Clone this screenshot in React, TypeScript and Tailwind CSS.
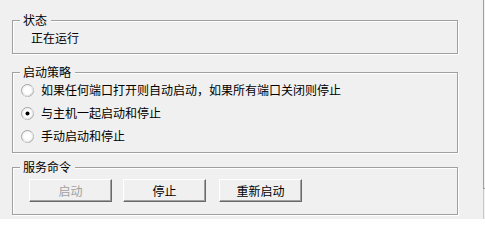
import React from "react";

const font = {
  fontFamily: '"Noto Sans CJK SC", "Noto Sans", sans-serif',
};

function GroupBox({
  title,
  className,
  children,
}: {
  title: string;
  className?: string;
  children: React.ReactNode;
}) {
  return (
    <fieldset
      className={`w-[446px] border border-[#a0a0a0] shadow-[1px_1px_0_#fff,inset_1px_1px_0_#fff] ${className ?? ""}`}
    >
      <legend className="ml-[7px] bg-[#f0f0f0] pl-[3px] pr-[4px] leading-[14px]">
        {title}
      </legend>
      {children}
    </fieldset>
  );
}

function Radio({ checked, label }: { checked?: boolean; label: string }) {
  return (
    <div className="flex h-[14px] items-center">
      <svg width="13" height="13" viewBox="0 0 13 13" className="shrink-0">
        <circle cx="6.5" cy="6.5" r="6" fill="#fff" stroke="#a0a0a0" />
        <path d="M2.3 10.7 A6 6 0 0 0 10.7 2.3" fill="none" stroke="#e3e3e3" strokeWidth="1" />
        <circle cx="6.5" cy="6.5" r="4.8" fill="#fff" stroke="#d8d8d8" strokeWidth="0.6" />
        {checked && <circle cx="6.5" cy="6.5" r="2" fill="#000" />}
      </svg>
      <span className="ml-[7px]">{label}</span>
    </div>
  );
}

function WinButton({
  label,
  disabled,
  className,
}: {
  label: string;
  disabled?: boolean;
  className?: string;
}) {
  return (
    <button
      className={`flex h-[23px] w-[83px] items-center justify-center border border-t-white border-l-white border-r-[#696969] border-b-[#696969] bg-[#f0f0f0] shadow-[inset_-1px_-1px_0_#a0a0a0] leading-[14px] ${
        disabled ? "text-[#a0a0a0]" : "text-black"
      } ${className ?? ""}`}
    >
      {label}
    </button>
  );
}

export default function App() {
  return (
    <div
      className="flex h-[219px] w-[485px] overflow-hidden bg-[#f0f0f0] text-[12px] text-black"
      style={font}
    >
      <div className="flex w-[483px] flex-col pl-[12px] pt-[13px]">
        <GroupBox title="状态">
          <div className="pl-[18px] pt-[4px] pb-[8px] leading-[14px]">正在运行</div>
        </GroupBox>

        <GroupBox title="启动策略" className="mt-[11px]">
          <div className="flex flex-col gap-[9px] pl-[8px] pt-[4px] pb-[9px] leading-[14px]">
            <Radio label="如果任何端口打开则自动启动，如果所有端口关闭则停止" />
            <Radio checked label="与主机一起启动和停止" />
            <Radio label="手动启动和停止" />
          </div>
        </GroupBox>

        <GroupBox title="服务命令" className="mt-[7px]">
          <div className="flex pl-[16px] pt-[5px] pb-[12px]">
            <WinButton label="启动" disabled />
            <WinButton label="停止" className="ml-[11px]" />
            <WinButton label="重新启动" className="ml-[13px]" />
          </div>
        </GroupBox>
      </div>

      <div className="flex w-[2px] flex-col">
        <div className="h-[188px] border-l border-[#a0a0a0]" />
        <div className="h-[1px] bg-[#a0a0a0]" />
        <div className="flex-1 border-l border-[#c8c8c8]" />
      </div>
    </div>
  );
}
